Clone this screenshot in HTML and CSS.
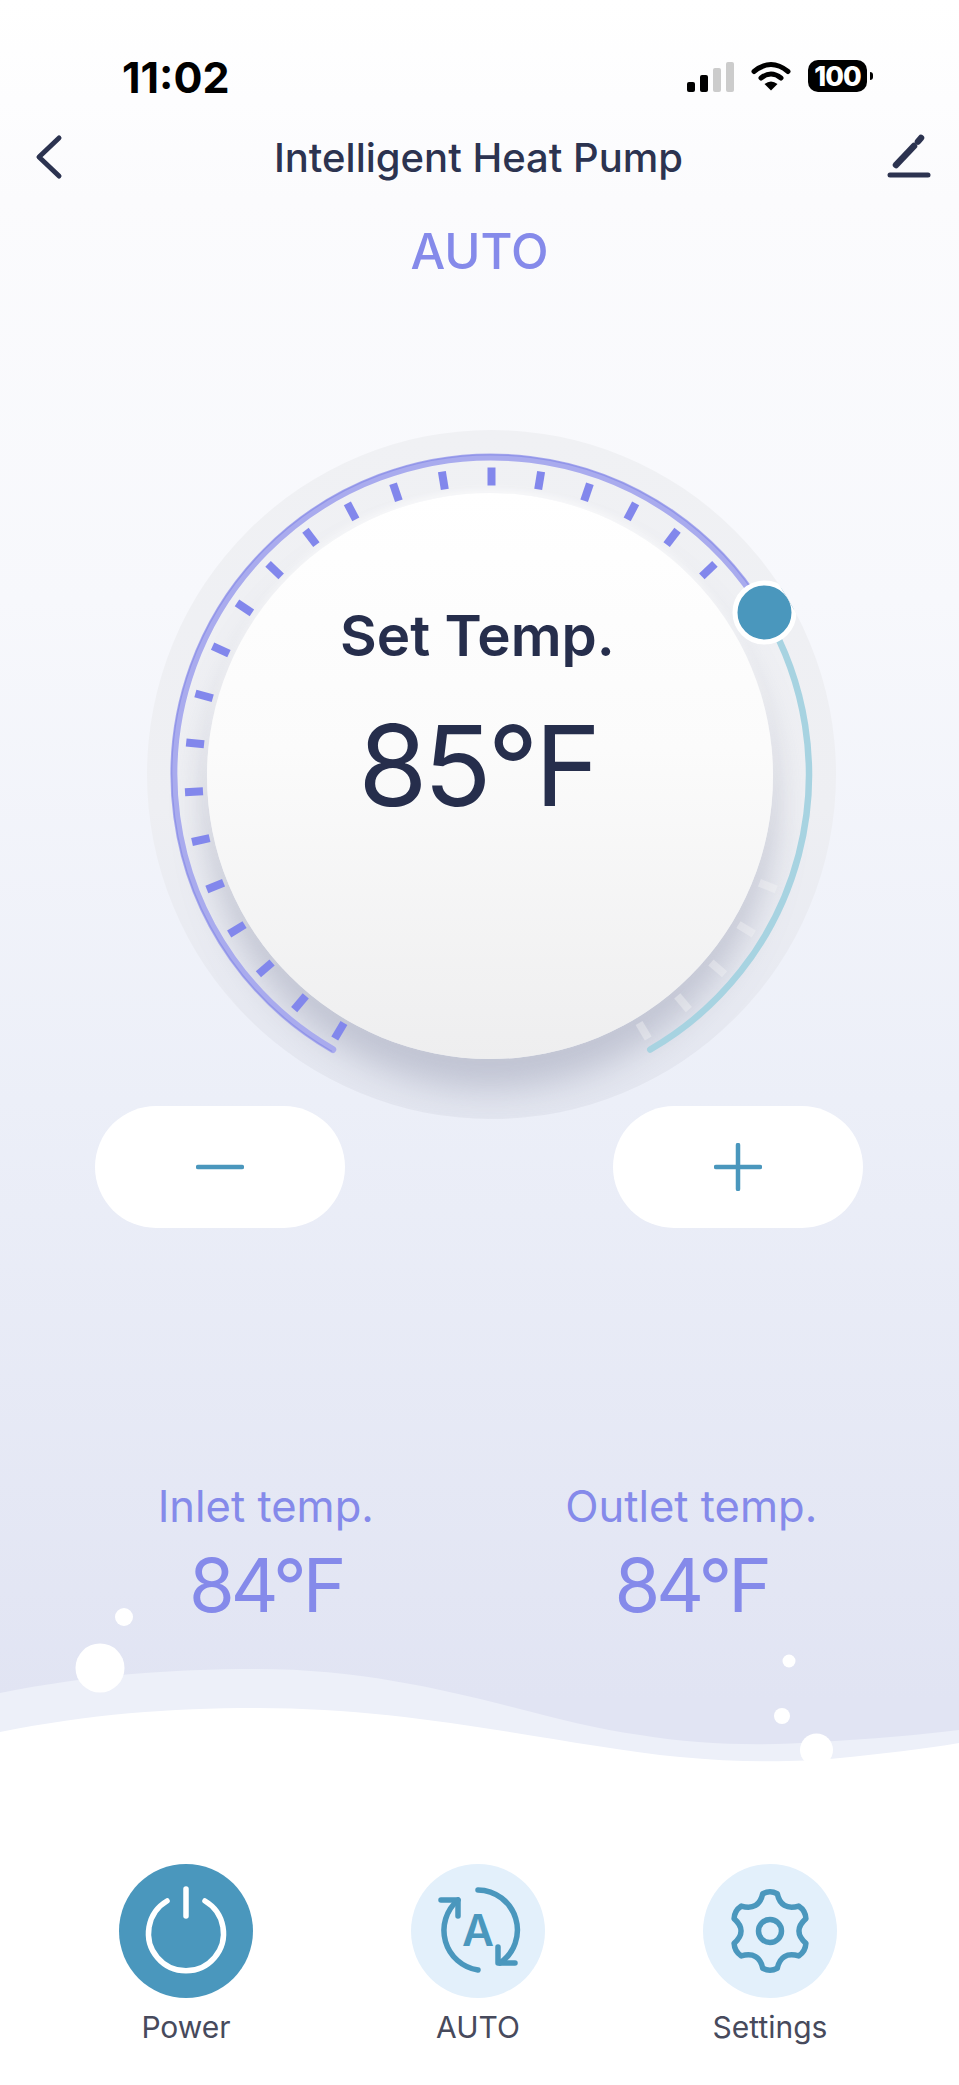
FILE: index.html
```html
<!DOCTYPE html>
<html lang="en">
<head>
  <meta charset="UTF-8" />
  <title>Intelligent Heat Pump</title>
  <link rel="stylesheet" href="styles.css">
</head>
<body>
  <div class="page">
    <svg class="wave" viewBox="0 1600 959 485" width="959" height="485">
      <path class="wave-back" d="M0 1693 C90 1675 170 1669 257 1669 C420 1669 540 1722 640 1735 C700 1745 760 1746 820 1742 C870 1739 920 1735 959 1730 V2085 H0 Z" />
      <path class="wave-front" d="M0 1732 C90 1714 170 1708 257 1708 C420 1708 560 1745 680 1757 C740 1763 800 1762 840 1758 C880 1754 925 1749 959 1743 V2085 H0 Z" />
      <circle class="bubble" cx="124" cy="1617" r="9" />
      <circle class="bubble" cx="100" cy="1668" r="24.5" />
      <circle class="bubble" cx="789" cy="1661" r="6.5" />
      <circle class="bubble" cx="782" cy="1716" r="8" />
      <circle class="bubble" cx="816.5" cy="1750" r="16.5" />
    </svg>

    <div class="status-bar">
      <span class="time">11:02</span>
      <div class="status-icons">
        <div class="signal">
          <span class="bar bar1"></span>
          <span class="bar bar2"></span>
          <span class="bar bar3"></span>
          <span class="bar bar4"></span>
        </div>
        <svg class="wifi" viewBox="0 0 40 30" width="40" height="30">
          <path d="M3 10.5 Q20 -3.5 37 10.5" />
          <path d="M10 17 Q20 9 30 17" />
          <path class="wifi-dot" d="M20 29.5 L13.5 23 Q20 18 26.5 23 Z" />
        </svg>
        <div class="battery">
          <span class="battery-level">100</span>
          <span class="battery-nub"></span>
        </div>
      </div>
    </div>

    <div class="nav">
      <svg class="nav-icon" viewBox="0 0 30 48" width="30" height="48">
        <path d="M25 5 L5 24 L25 43" />
      </svg>
      <h1 class="nav-title">Intelligent Heat Pump</h1>
      <svg class="nav-icon" viewBox="0 0 44 48" width="44" height="48">
        <path class="pen" d="M9 32 L27 13" />
        <path class="pen" d="M31 8.500 L34 5" />
        <path d="M3 42 H41" />
      </svg>
    </div>

    <div class="mode">AUTO</div>

    <div class="dial">
      <div class="disc">
        <div class="disc-label">Set Temp.</div>
        <div class="disc-value">85°F</div>
      </div>
      <svg class="dial-marks" viewBox="-344.5 -344.5 689 689" width="689" height="689">
        <g class="ticks-off">
          <line y1="-307" y2="-289" transform="rotate(112)" />
          <line y1="-307" y2="-289" transform="rotate(121.300)" />
          <line y1="-307" y2="-289" transform="rotate(130.600)" />
          <line y1="-307" y2="-289" transform="rotate(140)" />
          <line y1="-307" y2="-289" transform="rotate(149.300)" />
        </g>
        <g class="ticks-on">
          <line y1="-307" y2="-289" transform="rotate(-149.300)" />
          <line y1="-307" y2="-289" transform="rotate(-140)" />
          <line y1="-307" y2="-289" transform="rotate(-130.600)" />
          <line y1="-307" y2="-289" transform="rotate(-121.300)" />
          <line y1="-307" y2="-289" transform="rotate(-112)" />
          <line y1="-307" y2="-289" transform="rotate(-102.700)" />
          <line y1="-307" y2="-289" transform="rotate(-93.300)" />
          <line y1="-307" y2="-289" transform="rotate(-84)" />
          <line y1="-307" y2="-289" transform="rotate(-74.700)" />
          <line y1="-307" y2="-289" transform="rotate(-65.300)" />
          <line y1="-307" y2="-289" transform="rotate(-56)" />
          <line y1="-307" y2="-289" transform="rotate(-46.700)" />
          <line y1="-307" y2="-289" transform="rotate(-37.300)" />
          <line y1="-307" y2="-289" transform="rotate(-28)" />
          <line y1="-307" y2="-289" transform="rotate(-18.700)" />
          <line y1="-307" y2="-289" transform="rotate(-9.300)" />
          <line y1="-307" y2="-289" />
          <line y1="-307" y2="-289" transform="rotate(9.300)" />
          <line y1="-307" y2="-289" transform="rotate(18.700)" />
          <line y1="-307" y2="-289" transform="rotate(28)" />
          <line y1="-307" y2="-289" transform="rotate(37.300)" />
          <line y1="-307" y2="-289" transform="rotate(46.700)" />
        </g>
        <path class="arc-cool" d="M273 -162 A317.500 317.500 0 0 1 158.750 275" />
        <path class="arc-heat" d="M-158.750 275 A317.500 317.500 0 1 1 273 -162" />
        <path class="arc-heat-edge" d="M-159.750 276.700 A319.500 319.500 0 1 1 274.700 -163" />
        <circle class="knob" cx="273" cy="-162" r="29.500" />
      </svg>
    </div>

    <div class="steppers">
      <div class="stepper">
        <svg viewBox="0 0 48 48" width="48" height="48"><path d="M2 24 H46" /></svg>
      </div>
      <div class="stepper">
        <svg viewBox="0 0 48 48" width="48" height="48"><path d="M2 24 H46 M24 2 V46" /></svg>
      </div>
    </div>

    <div class="readings">
      <div class="reading">
        <div class="reading-label">Inlet temp.</div>
        <div class="reading-value">84°F</div>
      </div>
      <div class="reading">
        <div class="reading-label">Outlet temp.</div>
        <div class="reading-value">84°F</div>
      </div>
    </div>

    <div class="tabs">
      <div class="tab">
        <div class="tab-circle tab-circle-on">
          <svg viewBox="0 0 90 90" width="90" height="90">
            <path d="M26 15 A37.500 37.500 0 1 0 64 15" />
            <path d="M45 3 V30" />
          </svg>
        </div>
        <span class="tab-label">Power</span>
      </div>
      <div class="tab">
        <div class="tab-circle">
          <svg viewBox="0 0 90 90" width="90" height="90">
            <path d="M45 4 A40 40 0 0 1 67 77" />
            <path d="M45 84 A40 40 0 0 1 25 14" />
            <path d="M8 14 H25 V30" />
            <path d="M65 61 V77 H82" />
            <text class="tab-letter" x="45" y="60">A</text>
          </svg>
        </div>
        <span class="tab-label">AUTO</span>
      </div>
      <div class="tab">
        <div class="tab-circle">
          <svg viewBox="-45 -45 90 90" width="90" height="90">
            <path d="M-7.250 -37.300 Q0 -41 7.250 -37.300 Q11 -20 28.700 -24.900 Q35.500 -20.500 35.900 -12.400 Q22 0 35.900 12.400 Q35.500 20.500 28.700 24.900 Q11 20 7.250 37.300 Q0 41 -7.250 37.300 Q-11 20 -28.700 24.900 Q-35.500 20.500 -35.900 12.400 Q-22 0 -35.900 -12.400 Q-35.500 -20.500 -28.700 -24.900 Q-11 -20 -7.250 -37.300 Z" />
            <circle r="11.500" />
          </svg>
        </div>
        <span class="tab-label">Settings</span>
      </div>
    </div>
  </div>
</body>
</html>
```

FILE: styles.css
```css
* {
  box-sizing: border-box;
}
body {
  margin: 0;
  font-family: Inter, "Liberation Sans", sans-serif;
}
.page {
  position: relative;
  width: 959px;
  height: 2085px;
  overflow: hidden;
  background: linear-gradient(180deg, #fff 0, #fbfbfd 200px, #f7f8fc 600px, #eceff8 1100px, #e1e4f3 1700px);
}
.wave {
  position: absolute;
  left: 0;
  bottom: 0;
}
.wave-back {
  fill: #edf0f9;
}
.wave-front, .bubble {
  fill: #fff;
}

/* status bar */
.status-bar {
  position: relative;
  height: 100px;
  padding: 54px 92px 0 122px;
  display: flex;
  justify-content: space-between;
}
.time {
  font-size: 43px;
  line-height: 46px;
  font-weight: 700;
  color: #000;
}
.status-icons {
  display: flex;
  align-items: flex-start;
  gap: 17px;
  padding-top: 7px;
}
.signal {
  display: flex;
  align-items: flex-end;
  gap: 5px;
  height: 31px;
}
.bar {
  width: 8px;
  border-radius: 2px;
  background: #000;
}
.bar1 { height: 10px; }
.bar2 { height: 17px; }
.bar3 { height: 24px; background: #ccc; }
.bar4 { height: 30px; background: #ccc; }
.wifi path {
  fill: none;
  stroke: #000;
  stroke-width: 5;
  stroke-linecap: round;
}
.wifi .wifi-dot {
  fill: #000;
  stroke: none;
}
.battery {
  position: relative;
  width: 59px;
  height: 32px;
  margin-top: -1px;
  border-radius: 10px;
  background: #000;
  display: flex;
  justify-content: center;
  align-items: center;
}
.battery-level {
  font-size: 27px;
  font-weight: 800;
  letter-spacing: -1px;
  color: #fff;
}
.battery-nub {
  position: absolute;
  right: -6px;
  top: 12px;
  width: 3px;
  height: 8px;
  border-radius: 0 3px 3px 0;
  background: #000;
}

/* nav */
.nav {
  position: relative;
  height: 116px;
  padding: 0 28px 2px 34px;
  display: flex;
  justify-content: space-between;
  align-items: center;
}
.nav-title {
  margin: 0 0 0 6px;
  font-size: 40px;
  font-weight: 500;
  color: #2c3350;
}
.nav-icon path {
  fill: none;
  stroke: #2c3350;
  stroke-width: 5;
  stroke-linecap: round;
  stroke-linejoin: round;
}
.nav-icon .pen {
  stroke-width: 6.500;
}
.mode {
  position: relative;
  line-height: 72px;
  text-align: center;
  font-size: 49px;
  font-weight: 500;
  color: #858aea;
}

/* dial */
.dial {
  position: relative;
  width: 689px;
  height: 689px;
  margin: 142px 0 0 146.500px;
  border-radius: 50%;
  overflow: hidden;
  background: linear-gradient(180deg, #f0f1f4 0%, #eeeff3 55%, #e3e6f0 100%);
}
.disc {
  position: absolute;
  left: 60px;
  top: 63px;
  width: 566px;
  height: 566px;
  padding: 113px 24px 0 0;
  border-radius: 50%;
  background: linear-gradient(180deg, #fff 0%, #fbfbfb 45%, #eeeeef 100%);
  box-shadow: 0 30px 34px rgba(140, 145, 170, 0.42), 0 -3px 8px rgba(255, 255, 255, 0.7);
  text-align: center;
  color: #262e4c;
}
.disc-label {
  font-size: 56.500px;
  line-height: 60px;
  font-weight: 600;
}
.disc-value {
  margin-top: 39px;
  font-size: 112px;
  line-height: 120px;
  font-weight: 400;
  letter-spacing: -4px;
}
.dial-marks {
  position: absolute;
  left: 0;
  top: 0;
}
.ticks-on line, .ticks-off line {
  stroke-width: 8;
}
.ticks-on line {
  stroke: #8287ec;
}
.ticks-off line {
  stroke: #f4f4f6;
  opacity: 0.4;
}
.arc-heat, .arc-heat-edge, .arc-cool {
  fill: none;
  stroke-linecap: round;
}
.arc-heat {
  stroke: #a9abee;
  stroke-width: 7;
}
.arc-heat-edge {
  stroke: #9094e8;
  stroke-width: 1.200;
}
.arc-cool {
  stroke: #a7d3e1;
  stroke-width: 6.500;
}
.knob {
  fill: #4a97bd;
  stroke: #fff;
  stroke-width: 5;
}

/* plus and minus */
.steppers {
  position: relative;
  margin-top: -13px;
  padding: 0 96px 0 95px;
  display: flex;
  justify-content: space-between;
}
.stepper {
  width: 250px;
  height: 122px;
  border-radius: 61px;
  background: #fff;
  display: flex;
  justify-content: center;
  align-items: center;
}
.stepper path {
  fill: none;
  stroke: #4a97bd;
  stroke-width: 4.500;
  stroke-linecap: round;
}

/* readings */
.readings {
  position: relative;
  margin-top: 247px;
  padding: 0 55px 0 53px;
  display: grid;
  grid-template-columns: 1fr 1fr;
  text-align: center;
  color: #858aea;
}
.reading-label {
  font-size: 43.500px;
  line-height: 62px;
}
.reading-value {
  margin-top: 6px;
  font-size: 74px;
  line-height: 84px;
  letter-spacing: -4px;
}

/* bottom tabs */
.tabs {
  position: relative;
  margin-top: 237px;
  padding-left: 40px;
  display: grid;
  grid-template-columns: repeat(3, 292px);
}
.tab {
  display: flex;
  flex-direction: column;
  align-items: center;
}
.tab-circle {
  width: 134px;
  height: 134px;
  border-radius: 50%;
  background: #e3f0fb;
  display: flex;
  justify-content: center;
  align-items: center;
}
.tab-circle-on {
  background: #4a97bd;
}
.tab-circle svg path, .tab-circle svg circle {
  fill: none;
  stroke: #4a97bd;
  stroke-width: 5.500;
  stroke-linecap: round;
  stroke-linejoin: round;
}
.tab-circle-on svg path {
  stroke: #fff;
}
.tab-letter {
  font-size: 44px;
  font-weight: 600;
  text-anchor: middle;
  fill: #4a97bd;
}
.tab-label {
  margin-top: 10px;
  font-size: 30px;
  line-height: 38px;
  color: #474a5c;
}
```
